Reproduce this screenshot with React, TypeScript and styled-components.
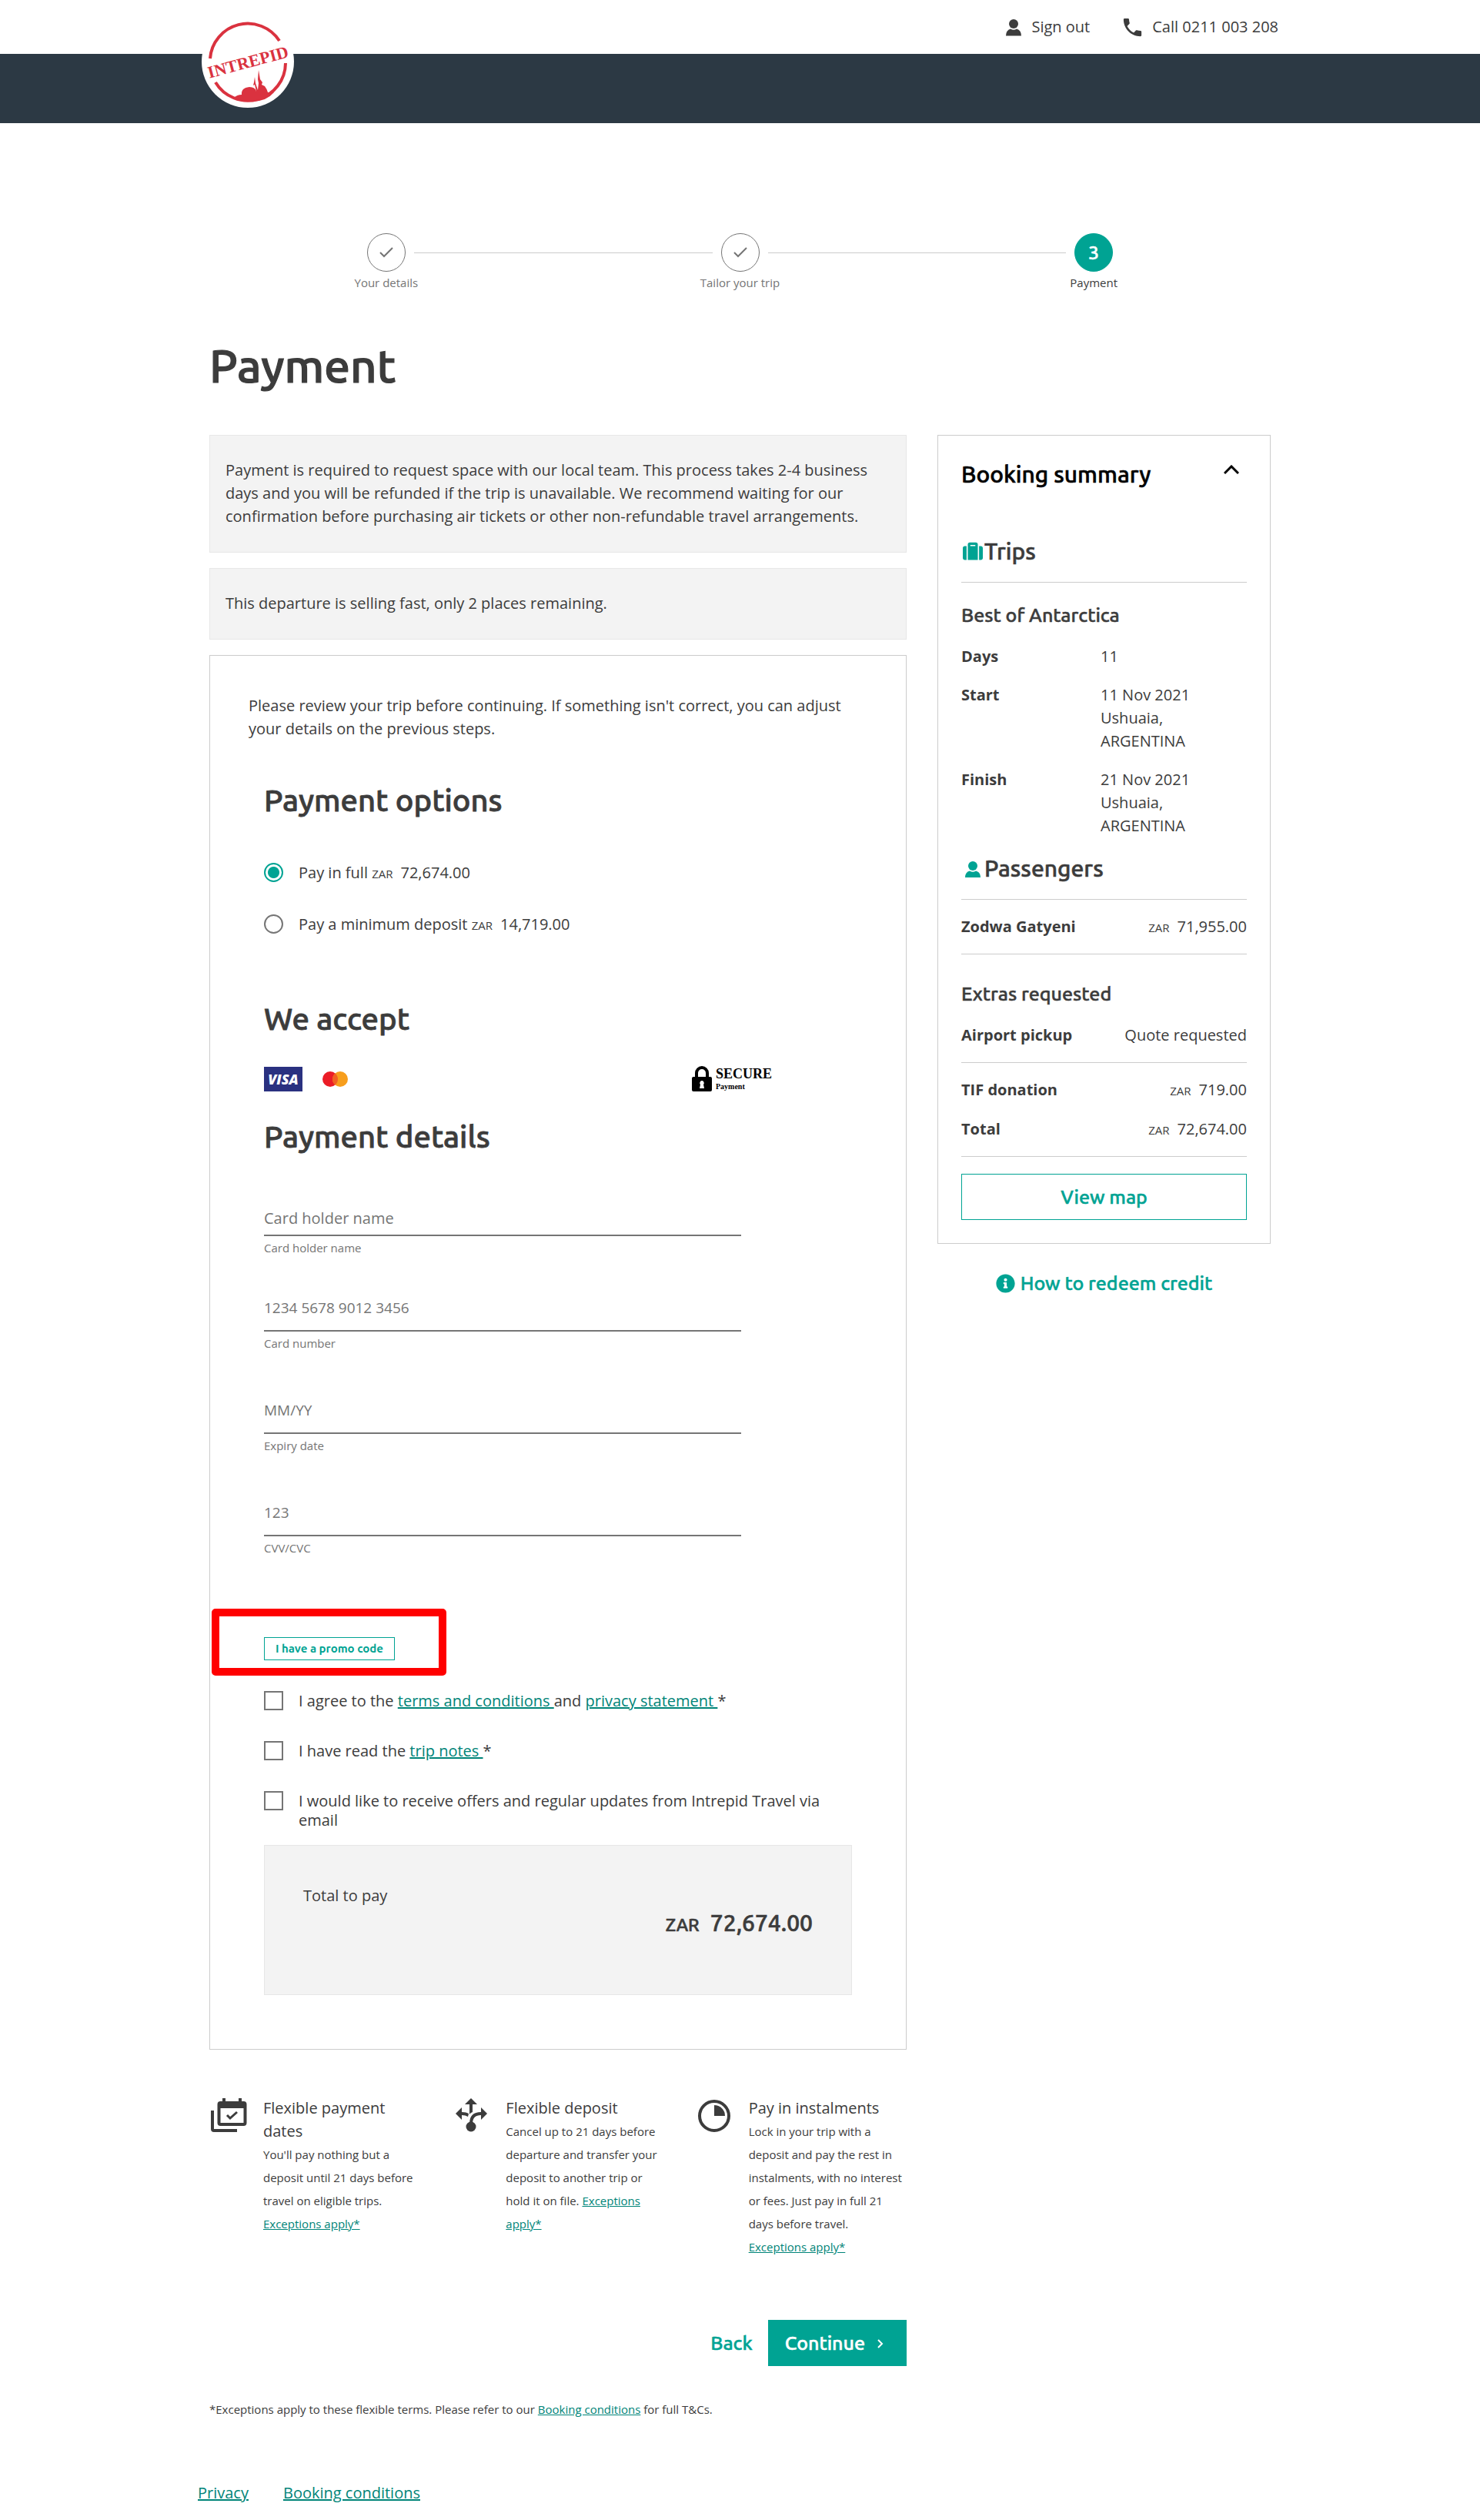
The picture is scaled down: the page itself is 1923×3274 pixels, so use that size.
import React, { useState } from "react";
import styled, { createGlobalStyle, css } from "styled-components";
import { MdPhone } from "react-icons/md";
import { FaInfoCircle, FaSuitcase } from "react-icons/fa";

const color = {
  ink: "#3c3c3c",
  muted: "#757575",
  teal: "#00a393",
  link: "#008478",
  navy: "#2c3944",
  rule: "#cccccc",
  panel: "#f3f3f3",
  panelEdge: "#e7e7e7",
  brand: "#da323f",
};

const display = `Ubuntu, "Open Sans", "Noto Sans", sans-serif`;

/* Display face in a medium weight: a hairline outline thickens the regular cut. */
const medium = css<{ $size?: string }>`
  font-family: ${display};
  font-weight: 500;
  -webkit-text-stroke: 0.02em currentColor;
`;

const GlobalStyle = createGlobalStyle`
  *, *::before, *::after { box-sizing: border-box; }
  body {
    margin: 0;
    background: #fff;
    color: ${color.ink};
    font: 400 20px/30px "Open Sans", "Noto Sans", sans-serif;
  }
  h1, h2, h3, h4, p, dl, dd, ul { margin: 0; padding: 0; }
  ul { list-style: none; }
  button, input { font: inherit; color: inherit; }
  svg { display: block; flex: none; }
`;

/* ---------- header ---------- */

const HeaderInner = styled.div`
  position: relative;
  max-width: 1399px;
  height: 70px;
  margin: 0 auto;
  display: flex;
  justify-content: flex-end;
  align-items: center;
  gap: 40px;
`;

const LogoLink = styled.a`
  position: absolute;
  left: 0;
  top: 20px;
`;

const HeaderLink = styled.a`
  display: flex;
  align-items: center;
  gap: 10px;
  color: ${color.ink};
  text-decoration: none;
`;

const NavBar = styled.nav`
  height: 90px;
  background: ${color.navy};
`;

/* ---------- page ---------- */

const Page = styled.main`
  max-width: 1379px;
  margin: 0 auto;
  padding-top: 143px;
`;

const Steps = styled.ol`
  display: grid;
  grid-template-columns: repeat(3, 1fr);
  margin: 0;
  padding: 0;
  list-style: none;
`;

const Step = styled.li<{ $current?: boolean }>`
  display: flex;
  flex-direction: column;
  gap: 4px;
  text-align: center;
  font-size: 15px;
  line-height: 20px;
  color: ${(p) => (p.$current ? color.ink : color.muted)};
`;

const StepTrack = styled.div`
  display: flex;
  align-items: center;
  gap: 11px;
`;

const Connector = styled.span<{ $on: boolean }>`
  flex: 1;
  height: 1px;
  background: ${(p) => (p.$on ? color.rule : "transparent")};
`;

const StepDot = styled.span<{ $current?: boolean }>`
  display: flex;
  align-items: center;
  justify-content: center;
  width: 50px;
  height: 50px;
  border: 1px solid ${(p) => (p.$current ? color.teal : color.muted)};
  border-radius: 50%;
  background: ${(p) => (p.$current ? color.teal : "#fff")};
  color: ${(p) => (p.$current ? "#fff" : color.muted)};
  font-size: 25px;
  line-height: 30px;
  ${medium}
`;

const PageTitle = styled.h1`
  margin: 62px 0 54px;
  font-size: 60px;
  line-height: 72px;
  ${medium}
`;

const Columns = styled.div`
  display: grid;
  grid-template-columns: minmax(0, 1fr) 433px;
  gap: 40px;
  align-items: start;
`;

const Notice = styled.p`
  margin-bottom: 20px;
  padding: 30px 20px 31px;
  border: 1px solid ${color.panelEdge};
  background: ${color.panel};
`;

const Card = styled.section`
  padding: 50px 50px 70px;
  border: 1px solid ${color.rule};
`;

const CardBody = styled.div`
  padding: 0 20px;
`;

const SectionTitle = styled.h2<{ $top: number; $bottom: number }>`
  margin: ${(p) => p.$top}px 0 ${(p) => p.$bottom}px;
  font-size: 40px;
  line-height: 50px;
  ${medium}
`;

const Stack = styled.div<{ $gap: number }>`
  display: flex;
  flex-direction: column;
  gap: ${(p) => p.$gap}px;
`;

const Option = styled.label`
  display: flex;
  align-items: flex-start;
  gap: 20px;
  line-height: 25px;
`;

const Radio = styled.input.attrs({ type: "radio" })`
  appearance: none;
  flex: none;
  width: 25px;
  height: 25px;
  margin: 0;
  border: 2px solid ${color.muted};
  border-radius: 50%;
  &:checked {
    border-color: ${color.teal};
    background: radial-gradient(circle, ${color.teal} 7px, transparent 8px);
  }
`;

const Checkbox = styled.input.attrs({ type: "checkbox" })`
  appearance: none;
  flex: none;
  width: 25px;
  height: 25px;
  margin: 0;
  border: 2px solid ${color.muted};
  &:checked {
    background: ${color.teal};
  }
`;

const Currency = styled.small`
  margin-right: 10px;
  font-size: 15px;
  line-height: 15px;
`;

const Link = styled.a`
  color: ${color.link};
  text-decoration: underline;
`;

const CardLogos = styled.div`
  display: flex;
  align-items: center;
  gap: 26px;
  max-width: 660px;
  height: 36px;
`;

const Secure = styled.span`
  display: flex;
  align-items: center;
  gap: 5px;
  margin-left: auto;
  color: #000;
`;

const SecureText = styled.span`
  font: bold 18px/19px "Liberation Serif", serif;
  small {
    display: block;
    font-size: 10px;
    line-height: 13px;
  }
`;

const Field = styled.div<{ $hosted?: boolean }>`
  display: flex;
  flex-direction: column;
  gap: 5px;
  max-width: 620px;
  margin-bottom: ${(p) => (p.$hosted ? 48 : 39)}px;
  &:last-child {
    margin-bottom: 0;
  }
  input {
    height: ${(p) => (p.$hosted ? 60 : 46)}px;
    padding: 0;
    border: 0;
    border-bottom: 2px solid ${color.muted};
    background: none;
    outline: none;
    font-size: ${(p) => (p.$hosted ? 19 : 20)}px;
  }
  input::placeholder {
    color: ${color.muted};
    opacity: 1;
  }
  label {
    font-size: 15px;
    line-height: 20px;
    color: ${color.muted};
  }
`;

const Promo = styled.div`
  position: relative;
  margin: 106px 0 40px;
`;

const PromoHighlight = styled.span`
  position: absolute;
  left: -68px;
  top: -37px;
  width: 305px;
  height: 87px;
  border: 10px solid #f00;
  border-radius: 5px;
  pointer-events: none;
`;

const PromoButton = styled.button`
  display: block;
  height: 30px;
  padding: 0 14px;
  border: 1px solid ${color.teal};
  background: #fff;
  color: ${color.teal};
  font: 700 15px/20px ${display};
`;

const TotalBox = styled.div`
  min-height: 195px;
  margin-top: 20px;
  padding: 50px;
  border: 1px solid ${color.panelEdge};
  background: ${color.panel};
`;

const TotalAmount = styled.p`
  text-align: right;
  font-size: 30px;
  line-height: 40px;
  ${medium}
  small {
    margin-right: 14px;
    font-size: 23px;
  }
`;

/* ---------- below the card ---------- */

const Features = styled.ul`
  display: grid;
  grid-template-columns: repeat(3, minmax(0, 1fr));
  gap: 40px;
  margin-top: 61px;
`;

const Feature = styled.li`
  display: grid;
  grid-template-columns: 50px minmax(0, 1fr);
  gap: 20px;
  p {
    font-size: 15px;
  }
`;

const FeatureTitle = styled.h3`
  font-size: 20px;
  font-weight: 400;
  line-height: 30px;
`;

const Actions = styled.div`
  display: flex;
  justify-content: flex-end;
  margin: 80px 0 41px;
`;

const Button = styled.button<{ $kind: "text" | "solid" | "outline" }>`
  display: flex;
  align-items: center;
  justify-content: center;
  gap: 16px;
  height: 60px;
  padding: 0 ${(p) => (p.$kind === "solid" ? 22 : 20)}px;
  border: ${(p) => (p.$kind === "outline" ? `1px solid ${color.teal}` : "0")};
  background: ${(p) => (p.$kind === "solid" ? color.teal : "transparent")};
  color: ${(p) => (p.$kind === "solid" ? "#fff" : color.teal)};
  font-size: 25px;
  line-height: 30px;
  ${medium}
`;

const Footnote = styled.p`
  font-size: 15px;
`;

const Footer = styled.footer`
  display: flex;
  gap: 45px;
  max-width: 1409px;
  margin: 0 auto;
  padding: 79px 0 19px;
`;

/* ---------- booking summary ---------- */

const Summary = styled.section`
  padding: 30px;
  border: 1px solid ${color.rule};
`;

const SummaryToggle = styled.button`
  display: flex;
  justify-content: space-between;
  align-items: flex-start;
  width: 100%;
  padding: 0;
  border: 0;
  background: none;
  color: #000;
  font-size: 30px;
  line-height: 40px;
  ${medium}
  svg {
    margin: 8px 10px;
  }
`;

const GroupTitle = styled.h3<{ $top: number }>`
  display: flex;
  align-items: center;
  margin-top: ${(p) => p.$top}px;
  padding-bottom: 20px;
  border-bottom: 1px solid ${color.rule};
  font-size: 30px;
  line-height: 40px;
  ${medium}
  svg {
    width: 30px;
    height: 26px;
  }
`;

const SubTitle = styled.h4<{ $top: number }>`
  margin: ${(p) => p.$top}px 0 24px;
  font-size: 25px;
  line-height: 30px;
  ${medium}
`;

const Facts = styled.dl`
  display: grid;
  grid-template-columns: 181px 1fr;
  row-gap: 20px;
  dt {
    font-weight: 700;
  }
  dd span {
    display: block;
  }
`;

const Amounts = styled.dl<{ $padTop: number }>`
  display: grid;
  gap: 21px;
  padding: ${(p) => p.$padTop}px 0 20px;
  border-bottom: 1px solid ${color.rule};
  div {
    display: flex;
    justify-content: space-between;
  }
  dt {
    font-weight: 700;
  }
`;

const ViewMap = styled(Button)`
  width: 100%;
  margin-top: 22px;
`;

const Redeem = styled.a`
  display: flex;
  align-items: center;
  justify-content: center;
  gap: 7px;
  margin-top: 36px;
  color: ${color.teal};
  font-size: 25px;
  line-height: 30px;
  ${medium}
  text-decoration: none;
`;

/* ---------- drawings ---------- */

const Logo = () => (
  <svg width="120" height="120" viewBox="0 0 120 120" role="img" aria-label="Intrepid">
    <circle cx="60" cy="60" r="60" fill="#fff" />
    <g fill="none" stroke={color.brand} strokeWidth="4">
      <path d="M11 56A49 49 0 0 1 101 33" />
      <path d="M18 87A49 49 0 0 0 109 62" />
    </g>
    <path
      d="M42 107q4-4 10-4-1-9 10-10 8 0 9 6l-2-9-2 1 1-4 1-7 1 8 3 9 1-9-1-5 1-12 2 12 3 4-1 3 4 2q3 4 4 8l8 0q-16 19-52 7z"
      fill={color.brand}
    />
    <text
      x="60"
      y="68"
      transform="rotate(-15 60 60)"
      textAnchor="middle"
      fill={color.brand}
      fontFamily="Liberation Serif, serif"
      fontWeight="700"
      fontSize="22"
    >
      INTREPID
    </text>
  </svg>
);

const Person = ({ width, height }: { width: number; height: number }) => (
  <svg width={width} height={height} viewBox="0 0 26 24" fill="currentColor" aria-hidden="true">
    <ellipse cx="13" cy="8" rx="6" ry="6" />
    <path d="M3 23.500q0-7 6-9 4 2.500 8 0 6 2 6 9z" />
  </svg>
);

const Tick = () => (
  <svg width="20" height="16" viewBox="0 0 20 16" fill="none" stroke="currentColor" strokeWidth="2" aria-hidden="true">
    <path d="M2 8l5 5L18 2" />
  </svg>
);

const Visa = () => (
  <svg width="50" height="32" viewBox="0 0 50 32" role="img" aria-label="Visa">
    <rect width="50" height="32" fill="#2a3180" />
    <text x="25" y="23" textAnchor="middle" fill="#fff" fontFamily="Open Sans, sans-serif" fontStyle="italic" fontWeight="800" fontSize="18">
      VISA
    </text>
  </svg>
);

const Mastercard = () => (
  <svg width="33" height="20" viewBox="0 0 33 20" role="img" aria-label="Mastercard">
    <circle cx="10" cy="10" r="10" fill="#eb1c26" />
    <circle cx="23" cy="10" r="10" fill="#f79e1c" />
    <path d="M16.500 2.400a10 10 0 0 1 0 15.200a10 10 0 0 1 0-15.200z" fill="#f16022" />
  </svg>
);

const Padlock = () => (
  <svg width="26" height="34" viewBox="0 0 26 34" aria-hidden="true">
    <path d="M6 16V9a7 7 0 0 1 14 0v7" fill="none" stroke="currentColor" strokeWidth="4" />
    <rect y="14" width="26" height="19" rx="2" fill="currentColor" />
    <path d="M13 19a3 3 0 0 1 2 5l1 5h-6l1-5a3 3 0 0 1 2-5z" fill="#fff" />
  </svg>
);

const CalendarIcon = () => (
  <svg width="50" height="50" viewBox="0 0 50 50" fill="none" stroke={color.ink} aria-hidden="true">
    <path d="M4 18v24q0 2 2 2h30" strokeWidth="4" />
    <rect x="12.500" y="8" width="34" height="28" rx="2" strokeWidth="4" />
    <path d="M19 2v6M40 2v6" strokeWidth="4" />
    <path d="M12 8h35v7H12z" fill={color.ink} stroke="none" />
    <path d="M23 24l4 4 9-8" strokeWidth="3" />
  </svg>
);

const ForkIcon = () => (
  <svg width="50" height="50" viewBox="0 0 50 50" fill={color.ink} aria-hidden="true">
    <circle cx="25" cy="39" r="6.500" />
    <path d="M25 2l8 8h-6v10q-3 1-4 3V10h-6z" />
    <path d="M5 22l8-8v6q6 0 9 2l-1 4q-3-2-8-2v6z" />
    <path d="M46 22l-8-8v6q-15 0-15 15h4q0-11 11-11v6z" />
  </svg>
);

const PieIcon = () => (
  <svg width="50" height="50" viewBox="0 0 50 50" aria-hidden="true">
    <circle cx="25" cy="25" r="19" fill="none" stroke={color.ink} strokeWidth="4" />
    <path d="M25 25V11a14 14 0 0 1 14 14z" fill={color.ink} />
  </svg>
);

/* ---------- content ---------- */

const steps = ["Your details", "Tailor your trip", "Payment"];

const fields = [
  { id: "holder", label: "Card holder name", hint: "Card holder name", hosted: false },
  { id: "number", label: "Card number", hint: "1234 5678 9012 3456", hosted: true },
  { id: "expiry", label: "Expiry date", hint: "MM/YY", hosted: true },
  { id: "cvv", label: "CVV/CVC", hint: "123", hosted: true },
];

const facts = [
  { term: "Days", lines: ["11"] },
  { term: "Start", lines: ["11 Nov 2021", "Ushuaia,", "ARGENTINA"] },
  { term: "Finish", lines: ["21 Nov 2021", "Ushuaia,", "ARGENTINA"] },
];

const Money = ({ value }: { value: string }) => (
  <>
    <Currency>ZAR</Currency>
    {value}
  </>
);

const AmountRow = ({ term, children }: { term: string; children: React.ReactNode }) => (
  <div>
    <dt>{term}</dt>
    <dd>{children}</dd>
  </div>
);

export default function App() {
  const [plan, setPlan] = useState("full");
  const [open, setOpen] = useState(true);

  return (
    <>
      <GlobalStyle />
      <header>
        <HeaderInner>
          <LogoLink href="#home">
            <Logo />
          </LogoLink>
          <HeaderLink href="#signout">
            <Person width={26} height={24} />
            Sign out
          </HeaderLink>
          <HeaderLink href="tel:0211003208">
            <MdPhone size={31} />
            Call 0211 003 208
          </HeaderLink>
        </HeaderInner>
        <NavBar />
      </header>

      <Page>
        <Steps>
          {steps.map((label, i) => {
            const current = i === steps.length - 1;
            return (
              <Step key={label} $current={current}>
                <StepTrack>
                  <Connector $on={i > 0} />
                  <StepDot $current={current}>{current ? i + 1 : <Tick />}</StepDot>
                  <Connector $on={!current} />
                </StepTrack>
                {label}
              </Step>
            );
          })}
        </Steps>

        <PageTitle>Payment</PageTitle>

        <Columns>
          <div>
            <Notice>
              Payment is required to request space with our local team. This process takes 2-4 business days and you
              will be refunded if the trip is unavailable. We recommend waiting for our confirmation before purchasing
              air tickets or other non-refundable travel arrangements.
            </Notice>
            <Notice>This departure is selling fast, only 2 places remaining.</Notice>

            <Card>
              <p>
                Please review your trip before continuing. If something isn't correct, you can adjust your details on
                the previous steps.
              </p>
              <CardBody>
                <SectionTitle $top={53} $bottom={56}>
                  Payment options
                </SectionTitle>
                <Stack $gap={42}>
                  <Option>
                    <Radio name="plan" checked={plan === "full"} onChange={() => setPlan("full")} />
                    <span>
                      Pay in full <Money value="72,674.00" />
                    </span>
                  </Option>
                  <Option>
                    <Radio name="plan" checked={plan === "deposit"} onChange={() => setPlan("deposit")} />
                    <span>
                      Pay a minimum deposit <Money value="14,719.00" />
                    </span>
                  </Option>
                </Stack>

                <SectionTitle $top={86} $bottom={35}>
                  We accept
                </SectionTitle>
                <CardLogos>
                  <Visa />
                  <Mastercard />
                  <Secure>
                    <Padlock />
                    <SecureText>
                      SECURE<small>Payment</small>
                    </SecureText>
                  </Secure>
                </CardLogos>

                <SectionTitle $top={32} $bottom={58}>
                  Payment details
                </SectionTitle>
                <div>
                  {fields.map((f) => (
                    <Field key={f.id} $hosted={f.hosted}>
                      <input id={f.id} placeholder={f.hint} />
                      <label htmlFor={f.id}>{f.label}</label>
                    </Field>
                  ))}
                </div>

                <Promo>
                  <PromoButton type="button">I have a promo code</PromoButton>
                  <PromoHighlight />
                </Promo>

                <Stack $gap={40}>
                  <Option>
                    <Checkbox />
                    <span>
                      I agree to the <Link href="#terms">terms and conditions </Link>and{" "}
                      <Link href="#privacy-statement">privacy statement </Link>*
                    </span>
                  </Option>
                  <Option>
                    <Checkbox />
                    <span>
                      I have read the <Link href="#notes">trip notes </Link>*
                    </span>
                  </Option>
                  <Option>
                    <Checkbox />
                    <span>I would like to receive offers and regular updates from Intrepid Travel via email</span>
                  </Option>
                </Stack>

                <TotalBox>
                  <p>Total to pay</p>
                  <TotalAmount>
                    <small>ZAR</small>72,674.00
                  </TotalAmount>
                </TotalBox>
              </CardBody>
            </Card>

            <Features>
              <Feature>
                <CalendarIcon />
                <div>
                  <FeatureTitle>Flexible payment dates</FeatureTitle>
                  <p>
                    You'll pay nothing but a deposit until 21 days before travel on eligible trips.{" "}
                    <Link href="#exceptions">Exceptions apply*</Link>
                  </p>
                </div>
              </Feature>
              <Feature>
                <ForkIcon />
                <div>
                  <FeatureTitle>Flexible deposit</FeatureTitle>
                  <p>
                    Cancel up to 21 days before departure and transfer your deposit to another trip or hold it on file.{" "}
                    <Link href="#exceptions">Exceptions apply*</Link>
                  </p>
                </div>
              </Feature>
              <Feature>
                <PieIcon />
                <div>
                  <FeatureTitle>Pay in instalments</FeatureTitle>
                  <p>
                    Lock in your trip with a deposit and pay the rest in instalments, with no interest or fees. Just pay
                    in full 21 days before travel. <Link href="#exceptions">Exceptions apply*</Link>
                  </p>
                </div>
              </Feature>
            </Features>

            <Actions>
              <Button type="button" $kind="text">
                Back
              </Button>
              <Button type="button" $kind="solid">
                Continue
                <svg width="16" height="16" viewBox="0 0 16 16" fill="none" stroke="currentColor" strokeWidth="2" aria-hidden="true">
                  <path d="M1 4l5 5-5 5" />
                </svg>
              </Button>
            </Actions>

            <Footnote>
              *Exceptions apply to these flexible terms. Please refer to our{" "}
              <Link href="#conditions">Booking conditions</Link> for full T&amp;Cs.
            </Footnote>
          </div>

          <aside>
            <Summary>
              <SummaryToggle type="button" aria-expanded={open} onClick={() => setOpen(!open)}>
                Booking summary
                <svg width="20" height="13" viewBox="0 0 20 13" fill="none" stroke="currentColor" strokeWidth="3" aria-hidden="true">
                  <path d="M1 11l9-9 9 9" />
                </svg>
              </SummaryToggle>
              {open && (
                <>
                  <GroupTitle $top={60}>
                    <FaSuitcase color={color.teal} />
                    Trips
                  </GroupTitle>
                  <SubTitle $top={27}>Best of Antarctica</SubTitle>
                  <Facts>
                    {facts.map((f) => (
                      <React.Fragment key={f.term}>
                        <dt>{f.term}</dt>
                        <dd>
                          {f.lines.map((line) => (
                            <span key={line}>{line}</span>
                          ))}
                        </dd>
                      </React.Fragment>
                    ))}
                  </Facts>

                  <GroupTitle $top={20}>
                    <svg viewBox="-2 -1 30 26" fill={color.teal} aria-hidden="true">
                      <circle cx="13" cy="9" r="6" />
                      <path d="M3 24q0-7 6-8.500 4 2.500 8 0 6 1.500 6 8.500z" />
                    </svg>
                    Passengers
                  </GroupTitle>
                  <Amounts $padTop={20}>
                    <AmountRow term="Zodwa Gatyeni">
                      <Money value="71,955.00" />
                    </AmountRow>
                  </Amounts>

                  <SubTitle $top={36}>Extras requested</SubTitle>
                  <Amounts $padTop={0}>
                    <AmountRow term="Airport pickup">Quote requested</AmountRow>
                  </Amounts>
                  <Amounts $padTop={20}>
                    <AmountRow term="TIF donation">
                      <Money value="719.00" />
                    </AmountRow>
                    <AmountRow term="Total">
                      <Money value="72,674.00" />
                    </AmountRow>
                  </Amounts>
                  <ViewMap type="button" $kind="outline">
                    View map
                  </ViewMap>
                </>
              )}
            </Summary>
            <Redeem href="#redeem">
              <FaInfoCircle size={25} />
              How to redeem credit
            </Redeem>
          </aside>
        </Columns>
      </Page>

      <Footer>
        <Link href="#privacy">Privacy</Link>
        <Link href="#booking-conditions">Booking conditions</Link>
      </Footer>
    </>
  );
}
